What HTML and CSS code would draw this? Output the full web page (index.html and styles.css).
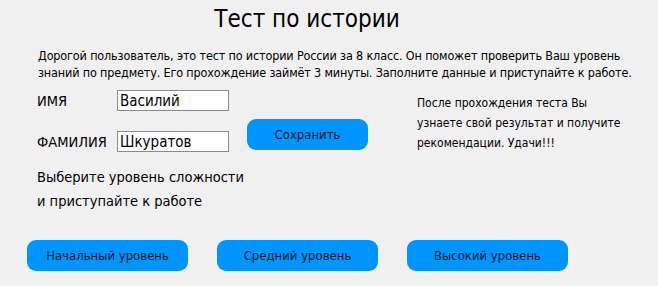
FILE: index.html
```html
<!DOCTYPE html>
<html lang="ru">
<head>
  <meta charset="UTF-8">
  <meta name="viewport" content="width=device-width, initial-scale=1.0">
  <title>Тест по истории</title>
  <link rel="stylesheet" href="styles.css">
</head>
<body>
  <div class="page">
    <h1 class="title">Тест по истории</h1>
    <p class="intro">Дорогой пользователь, это тест по истории России за 8 класс. Он поможет проверить Ваш уровень знаний по предмету. Его прохождение займёт 3 минуты. Заполните данные и приступайте к работе.</p>

    <div class="main">
      <div class="left">
        <div class="form">
          <div class="fields">
            <label class="row">
              <span class="label">ИМЯ</span>
              <input class="field" type="text" value="Василий">
            </label>
            <label class="row">
              <span class="label">ФАМИЛИЯ</span>
              <input class="field" type="text" value="Шкуратов">
            </label>
          </div>
          <button class="btn btn-save">Сохранить</button>
        </div>
        <p class="choose">Выберите уровень сложности<br>и приступайте к работе</p>
      </div>
      <p class="note">После прохождения теста Вы<br>узнаете свой результат и получите<br>рекомендации. Удачи!!!</p>
    </div>

    <div class="levels">
      <button class="btn btn-level">Начальный уровень</button>
      <button class="btn btn-level">Средний уровень</button>
      <button class="btn btn-level">Высокий уровень</button>
    </div>
  </div>
</body>
</html>
```

FILE: styles.css
```css
html, body {
  width: 100%;
  height: 100%;
  overflow: hidden;
}

body {
  margin: 0;
  padding: 0;
  background-color: #f0f0f0;
  color: #000;
  font-family: 'DejaVu Sans Condensed', 'DejaVu Sans', sans-serif;
}

.page {
  padding: 0 0 0 37px;
}

.title {
  width: 540px;
  margin: 0;
  padding-top: 5px;
  font-size: 24px;
  font-weight: normal;
  line-height: 28px;
  text-align: center;
}

.intro {
  margin: 14px 0 0 1px;
  width: 600px;
  font-size: 12.5px;
  letter-spacing: -0.15px;
  line-height: 17px;
}

.main {
  display: flex;
  margin-top: 9px;
}

.left {
  width: 380px;
}

.form {
  display: flex;
  align-items: flex-end;
  gap: 18px;
}

.fields {
  display: flex;
  flex-direction: column;
  gap: 20px;
}

.row {
  display: flex;
  align-items: center;
  font-size: 14.5px;
}

.label {
  width: 80px;
}

.field {
  width: 112px;
  height: 21px;
  box-sizing: border-box;
  margin: 0;
  padding: 0 2px;
  border: 1px solid #8a8a8a;
  background: #fff;
  font-family: inherit;
  font-size: 15px;
  color: #000;
}

.btn {
  border: none;
  border-radius: 9px;
  background-color: #0094ff;
  color: #0c1a33;
  font-family: inherit;
  font-size: 13px;
  cursor: pointer;
}

.btn-save {
  width: 121px;
  height: 31px;
  margin-bottom: 2px;
}

.choose {
  margin: 13px 0 0;
  font-size: 14.5px;
  line-height: 24px;
}

.note {
  margin: 3px 0 0;
  font-size: 12px;
  line-height: 20px;
}

.levels {
  display: flex;
  gap: 29px;
  margin: 27px 0 0 -10px;
}

.btn-level {
  width: 161px;
  height: 31px;
}
```
